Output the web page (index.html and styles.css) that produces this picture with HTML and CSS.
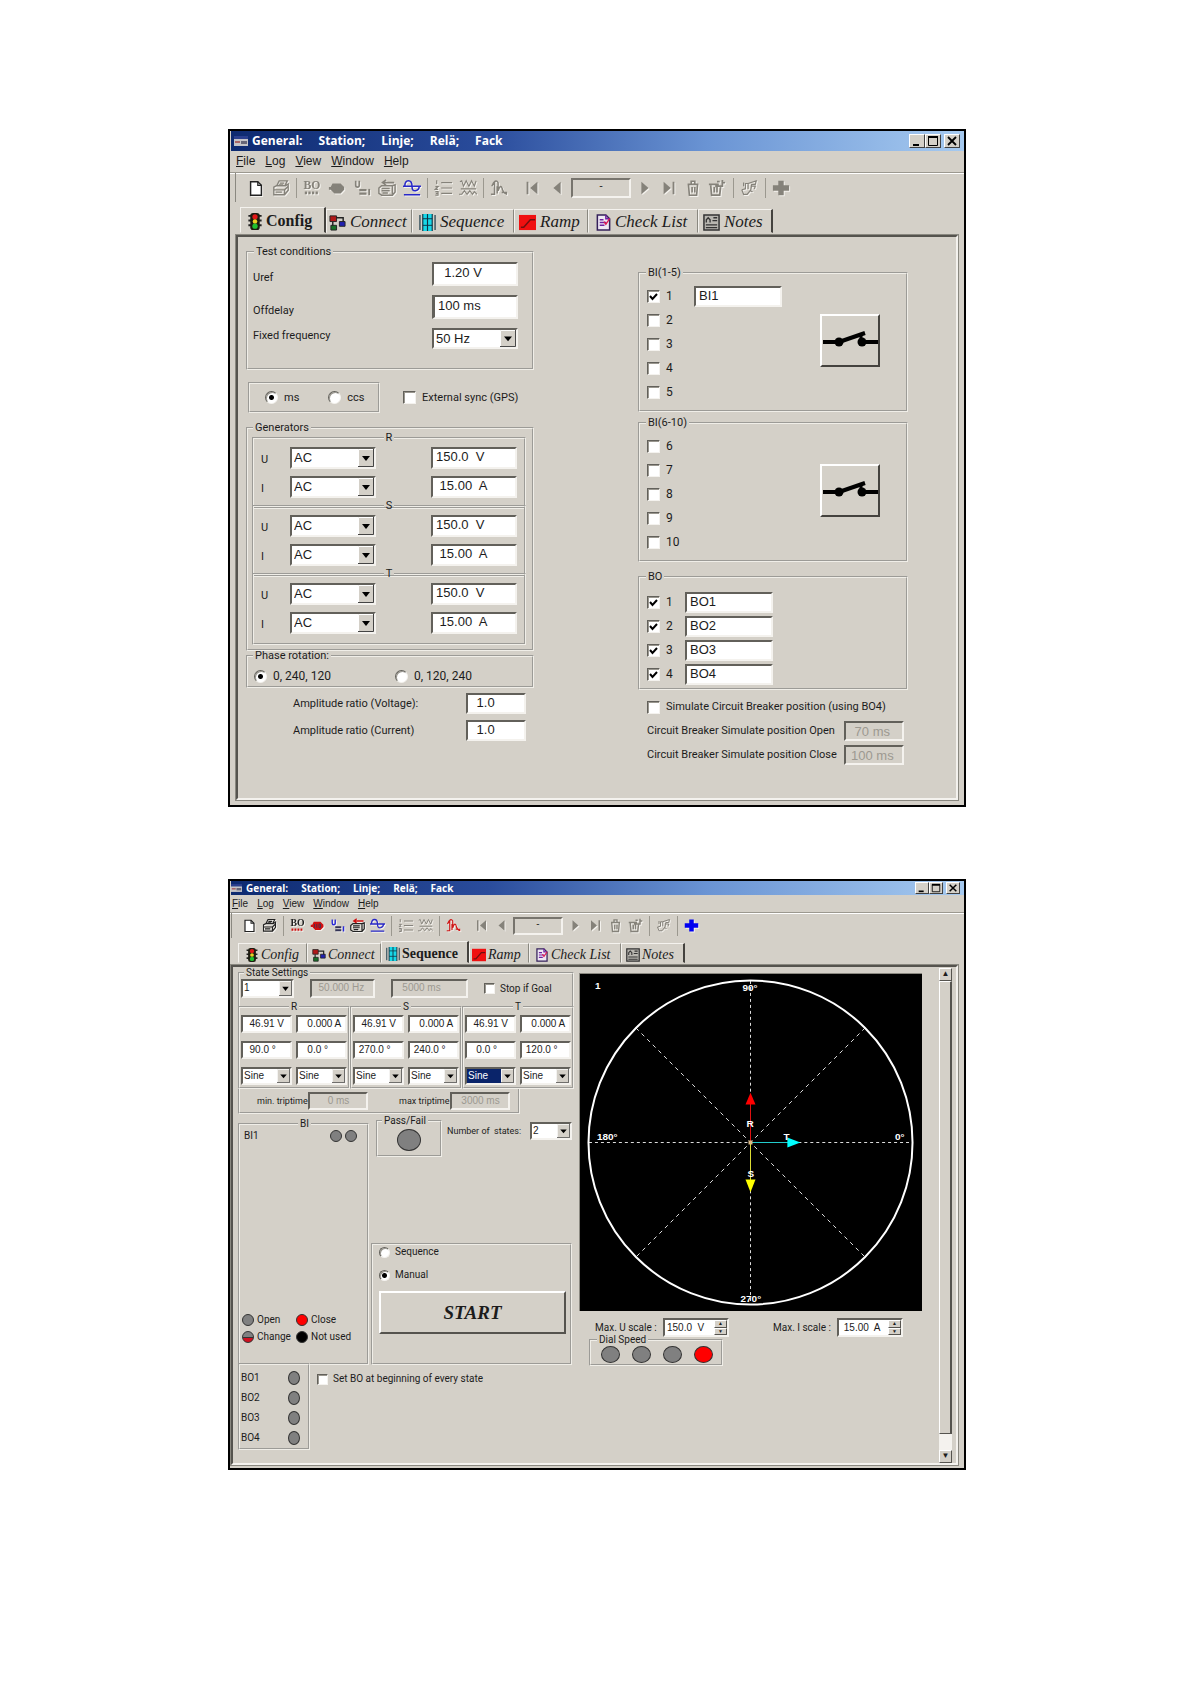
FILE: index.html
```html
<!DOCTYPE html>
<html lang="en">
<head>
<meta charset="utf-8">
<title>Relay test set</title>
<link rel="stylesheet" href="styles.css">
</head>
<body>
<svg class="sprite" aria-hidden="true">
  <symbol id="i-app" viewBox="0 0 14 10"><path d="M0 0h14v3H0z" fill="#2a3f8e"/><path d="M0 3h14v7H0z" fill="#c4c4c8"/><path d="M1 5h5v2H1z" fill="#a66"/><path d="M7 5h6v3H7z" fill="#667"/></symbol>
  <symbol id="i-new" viewBox="0 0 20 20"><path d="M4 3h8l4 4v11H4z" fill="#fff" stroke="currentColor" stroke-width="1.6"/><path d="M12 3v4h4" fill="none" stroke="currentColor" stroke-width="1.4"/></symbol>
  <symbol id="i-print" viewBox="0 0 20 20"><g fill="none" stroke="currentColor" stroke-width="1.5"><path d="M5 8l3-6h9l-3 6M8.500 4.500h5M7.500 6.500h5M2 9l3-1.500h10l3-2v7l-4 5H2zM2 12h12l4-4M14 12v5M4 14.500h7"/></g></symbol>
  <symbol id="i-bo" viewBox="0 0 20 20"><text x="10" y="11" text-anchor="middle" font-family="Liberation Serif, serif" font-weight="bold" font-size="13" fill="currentColor">BO</text><path d="M2 15.500h16" stroke="var(--accent, currentColor)" stroke-width="3" stroke-dasharray="2.500 1.500"/></symbol>
  <symbol id="i-fault" viewBox="0 0 20 20"><path d="M5 5h9l4 4v3l-4 4H7l-4-4H1V9h2z" fill="var(--accent, currentColor)"/><path d="M6 8v5M9 8v5M12 8v5h2V8z" stroke="var(--ink, currentColor)" fill="none"/></symbol>
  <symbol id="i-ui" viewBox="0 0 20 20"><path d="M3 2v5q0 2 2 2t2-2V2" fill="none" stroke="var(--blue, currentColor)" stroke-width="1.800"/><path d="M7 11h8v2.500H7zM7 15h8v2.500H7z" fill="var(--ink, currentColor)"/><path d="M18 11v7" stroke="var(--blue, currentColor)" stroke-width="2"/></symbol>
  <symbol id="i-send" viewBox="0 0 20 20"><path d="M18 4H5m4-3L5 4l4 3" fill="none" stroke="var(--accent, currentColor)" stroke-width="1.800"/><path d="M1 10l3-2.500h12l3-1v8l-3 3.500H4l-3-2zM4 10.500h9M4 13h9M16 8v9M5 15.500h6" fill="none" stroke="currentColor" stroke-width="1.600"/></symbol>
  <symbol id="i-wave" viewBox="0 0 20 20"><path d="M0 8h20M2 8q0-6 4-6t4 6 4 5 4-5M1 17.500h18" fill="none" stroke="currentColor" stroke-width="1.700"/></symbol>
  <symbol id="i-list" viewBox="0 0 20 20"><path d="M8 4h12M8 10h12M8 16h12M3 1.500v4M1.500 8.500h3l-3 3h3M1.500 14h3v4h-3M2 16h2" fill="none" stroke="currentColor" stroke-width="1.300"/></symbol>
  <symbol id="i-waves" viewBox="0 0 20 20"><path d="M1 3l2-1 2 6 3-6 3 6 3-6 3 6 2-6M0 17h3l3-4 3 4 3-4 3 4 2-3 3 3M2 11h17" fill="none" stroke="currentColor" stroke-width="1.200"/></symbol>
  <symbol id="i-fft" viewBox="0 0 20 20"><path d="M1 17h4V3M2 8q4-9 7-4v9q3-9 5-1 1 4 5 5M8 8v8M13 15h6" fill="none" stroke="currentColor" stroke-width="1.600"/></symbol>
  <symbol id="i-first" viewBox="0 0 20 20"><path d="M4 3h2v14H4zM16 3v14l-8-7z" fill="currentColor"/></symbol>
  <symbol id="i-prev" viewBox="0 0 20 20"><path d="M14 3v14l-8-7z" fill="currentColor"/></symbol>
  <symbol id="i-next" viewBox="0 0 20 20"><path d="M6 3v14l8-7z" fill="currentColor"/></symbol>
  <symbol id="i-last" viewBox="0 0 20 20"><path d="M4 3v14l8-7zM14 3h2v14h-2z" fill="currentColor"/></symbol>
  <symbol id="i-trash" viewBox="0 0 20 20"><path d="M4 6h12M8 5V2.500h4V5M5 7l1 11h8l1-11M9 9v6M12 9v6" fill="none" stroke="currentColor" stroke-width="1.800"/></symbol>
  <symbol id="i-trash2" viewBox="0 0 20 20"><path d="M1 6h11M3 7l1 11h9l1-9M7 9v6M10 9v6M8 8h8v-4h3M16 1v7M10 3h3" fill="none" stroke="currentColor" stroke-width="1.900"/></symbol>
  <symbol id="i-hand" viewBox="0 0 20 20"><path d="M2 12l4-1V5h3v6M9 5l9-3-1 4h-4l-1 6-4 5H4l-2-5M13 8h4l-1 3M4 4v4M11 13l3 1" fill="none" stroke="currentColor" stroke-width="1.300"/></symbol>
  <symbol id="i-plus" viewBox="0 0 20 20"><path d="M7 2h6v5h6v6h-6v5H7v-5H1V7h6z" fill="currentColor"/></symbol>
  <symbol id="t-light" viewBox="0 0 14 18"><path d="M0 3h14M0 8h14M0 13h14" stroke="#222" stroke-width="2"/><rect x="2" width="10" height="18" rx="3" fill="#1c1c10"/><circle cx="7" cy="4" r="2.800" fill="#e01818"/><circle cx="7" cy="9" r="2.400" fill="#e8d020"/><circle cx="7" cy="14" r="2.800" fill="#20c030"/></symbol>
  <symbol id="t-connect" viewBox="0 0 18 18"><path d="M6 4h9v6M4 8v5" stroke="#222" stroke-width="1.500" fill="none"/><path d="M1 2h7v6H1z" fill="#b01818" stroke="#222"/><path d="M11 8h6v5h-6z" fill="#2020b0" stroke="#222"/><path d="M2 12h6v5H2z" fill="#187028" stroke="#222"/></symbol>
  <symbol id="t-seq" viewBox="0 0 18 18"><path d="M4 0h10v18H4z" fill="#18d8e8"/><path d="M1 1v16M4 0v18M9 0v18M14 0v18M17 1v16" stroke="#134" stroke-width="1.200"/><path d="M4 5h10M4 12h10" stroke="#134"/></symbol>
  <symbol id="t-ramp" viewBox="0 0 18 18"><path d="M0 1h18v16H0z" fill="#f01010"/><path d="M2 14h3l7-8h5" fill="none" stroke="#701010" stroke-width="1.600"/></symbol>
  <symbol id="t-check" viewBox="0 0 15 18"><path d="M1 1h9l4 4v12H1z" fill="#eee8f4" stroke="#34205a" stroke-width="1.600"/><path d="M10 1v4h4M3.500 6h4M3.500 9h7M3.500 12h5" fill="none" stroke="#7020a0" stroke-width="1.600"/><path d="M8 8l2 3 4-6" fill="none" stroke="#e01850" stroke-width="1.400"/></symbol>
  <symbol id="t-notes" viewBox="0 0 18 18"><path d="M1 1h16v16H1z" fill="#b8b6b0" stroke="#333" stroke-width="1.600"/><path d="M3.500 9V6l2-2 2 2v3M11 4h4M10 7h5M3 11.500h12M3 14.500h12" fill="none" stroke="#333" stroke-width="1.400"/></symbol>
  <symbol id="i-switch" viewBox="0 0 56 48"><path d="M1 25h17M38 25h18" stroke="#000" stroke-width="4"/><path d="M17 25l26-9" stroke="#000" stroke-width="4"/><path d="M39 18v6" stroke="#000" stroke-width="3"/><circle cx="17" cy="25" r="4.500"/><circle cx="40" cy="25" r="4.500"/></symbol>
  <symbol id="i-min" viewBox="0 0 12 12"><path d="M2 9h6v2H2z"/></symbol>
  <symbol id="i-max" viewBox="0 0 12 12"><path d="M1.500 2.500h9v8h-9z" fill="none" stroke="#000"/><path d="M1 1h10v2H1z"/></symbol>
  <symbol id="i-close" viewBox="0 0 12 12"><path d="M2 2l8 8M10 2l-8 8" stroke="#000" stroke-width="1.800"/></symbol>
</svg>

<main class="page">
  <section class="window window--config" aria-label="Configuration window">
    <header class="titlebar">
      <svg class="titlebar__icon"><use href="#i-app"/></svg>
      <h1 class="titlebar__text"><span>General:</span><span>Station;</span><span>Linje;</span><span>Relä;</span><span>Fack</span></h1>
      <div class="titlebar__buttons">
        <button class="capbtn" aria-label="Minimize"><svg><use href="#i-min"/></svg></button><button class="capbtn" aria-label="Maximize"><svg><use href="#i-max"/></svg></button><button class="capbtn capbtn--close" aria-label="Close"><svg><use href="#i-close"/></svg></button>
      </div>
    </header>
    <nav class="menu"><button><u>F</u>ile</button><button><u>L</u>og</button><button><u>V</u>iew</button><button><u>W</u>indow</button><button><u>H</u>elp</button></nav>
    <div class="toolbar">
      <button class="tool tool--ink" aria-label="New"><svg><use href="#i-new"/></svg></button>
      <button class="tool" aria-label="Print"><svg><use href="#i-print"/></svg></button>
      <i class="sep"></i>
      <button class="tool" aria-label="Binary outputs"><svg><use href="#i-bo"/></svg></button>
      <button class="tool" aria-label="Fault"><svg><use href="#i-fault"/></svg></button>
      <button class="tool" aria-label="Voltage and current"><svg><use href="#i-ui"/></svg></button>
      <button class="tool" aria-label="Send"><svg><use href="#i-send"/></svg></button>
      <button class="tool tool--blue" aria-label="Waveform"><svg><use href="#i-wave"/></svg></button>
      <i class="sep"></i>
      <button class="tool" aria-label="List"><svg><use href="#i-list"/></svg></button>
      <button class="tool" aria-label="Waves"><svg><use href="#i-waves"/></svg></button>
      <i class="sep"></i>
      <button class="tool" aria-label="Transient"><svg><use href="#i-fft"/></svg></button>
      <i class="gap"></i>
      <button class="tool" aria-label="First"><svg><use href="#i-first"/></svg></button>
      <button class="tool" aria-label="Previous"><svg><use href="#i-prev"/></svg></button>
      <output class="counter">-</output>
      <button class="tool tool--tight" aria-label="Next"><svg><use href="#i-next"/></svg></button>
      <button class="tool tool--tight" aria-label="Last"><svg><use href="#i-last"/></svg></button>
      <button class="tool tool--tight" aria-label="Delete"><svg><use href="#i-trash"/></svg></button>
      <button class="tool tool--tight" aria-label="Delete all"><svg><use href="#i-trash2"/></svg></button>
      <i class="sep sep--light"></i>
      <button class="tool tool--tight" aria-label="Pick"><svg><use href="#i-hand"/></svg></button>
      <i class="sep sep--light"></i>
      <button class="tool tool--tight" aria-label="Add"><svg><use href="#i-plus"/></svg></button>
    </div>
    <div class="tabs" role="tablist">
      <button class="tab tab--config tab--active" role="tab" aria-selected="true"><svg><use href="#t-light"/></svg>Config</button>
      <button class="tab tab--connect" role="tab"><svg><use href="#t-connect"/></svg>Connect</button>
      <button class="tab tab--seq" role="tab"><svg><use href="#t-seq"/></svg>Sequence</button>
      <button class="tab tab--ramp" role="tab"><svg><use href="#t-ramp"/></svg>Ramp</button>
      <button class="tab tab--check" role="tab"><svg><use href="#t-check"/></svg>Check List</button>
      <button class="tab tab--notes" role="tab"><svg><use href="#t-notes"/></svg>Notes</button>
    </div>

    <div class="panel panel--config">
      <div class="config-left">
        <fieldset class="group conditions">
          <legend>Test conditions</legend>
          <label for="uref">Uref</label><input class="field" id="uref" value="  1.20 V">
          <label for="offdelay">Offdelay</label><input class="field field--caret" id="offdelay" value="100 ms">
          <label for="freq">Fixed frequency</label><select class="field" id="freq"><option>50 Hz</option></select>
        </fieldset>
        <div class="unit-row">
          <div class="units">
            <label class="opt"><input type="radio" name="unit" checked>ms</label>
            <label class="opt"><input type="radio" name="unit">ccs</label>
          </div>
          <label class="opt"><input type="checkbox">External sync (GPS)</label>
        </div>
        <fieldset class="group generators">
          <legend>Generators</legend>
          <fieldset class="group generator">
            <legend>R</legend>
            <label for="ru">U</label><select class="field" id="ru"><option>AC</option></select><input class="field" aria-label="R voltage" value="150.0  V">
            <label for="ri">I</label><select class="field" id="ri"><option>AC</option></select><input class="field" aria-label="R current" value=" 15.00  A">
          </fieldset>
          <fieldset class="group generator">
            <legend>S</legend>
            <label for="su">U</label><select class="field" id="su"><option>AC</option></select><input class="field" aria-label="S voltage" value="150.0  V">
            <label for="si">I</label><select class="field" id="si"><option>AC</option></select><input class="field" aria-label="S current" value=" 15.00  A">
          </fieldset>
          <fieldset class="group generator">
            <legend>T</legend>
            <label for="tu">U</label><select class="field" id="tu"><option>AC</option></select><input class="field" aria-label="T voltage" value="150.0  V">
            <label for="ti">I</label><select class="field" id="ti"><option>AC</option></select><input class="field" aria-label="T current" value=" 15.00  A">
          </fieldset>
        </fieldset>
        <fieldset class="group rotation">
          <legend>Phase rotation:</legend>
          <label class="opt"><input type="radio" name="rot" checked>0, 240, 120</label>
          <label class="opt"><input type="radio" name="rot">0, 120, 240</label>
        </fieldset>
        <div class="ratios">
          <label for="ratio-u">Amplitude ratio (Voltage):</label><input class="field" id="ratio-u" value=" 1.0">
          <label for="ratio-i">Amplitude ratio (Current)</label><input class="field" id="ratio-i" value=" 1.0">
        </div>
      </div>

      <div class="config-right">
        <fieldset class="group inputs">
          <legend>BI(1-5)</legend>
          <div class="bits">
            <div class="bit"><label class="opt"><input type="checkbox" checked>1</label><input class="field" aria-label="BI 1 name" value="BI1"></div>
            <div class="bit"><label class="opt"><input type="checkbox">2</label></div>
            <div class="bit"><label class="opt"><input type="checkbox">3</label></div>
            <div class="bit"><label class="opt"><input type="checkbox">4</label></div>
            <div class="bit"><label class="opt"><input type="checkbox">5</label></div>
          </div>
          <button class="switch" aria-label="Contact type, inputs 1 to 5"><svg><use href="#i-switch"/></svg></button>
        </fieldset>
        <fieldset class="group inputs inputs--second">
          <legend>BI(6-10)</legend>
          <div class="bits">
            <div class="bit"><label class="opt"><input type="checkbox">6</label></div>
            <div class="bit"><label class="opt"><input type="checkbox">7</label></div>
            <div class="bit"><label class="opt"><input type="checkbox">8</label></div>
            <div class="bit"><label class="opt"><input type="checkbox">9</label></div>
            <div class="bit"><label class="opt"><input type="checkbox">10</label></div>
          </div>
          <button class="switch" aria-label="Contact type, inputs 6 to 10"><svg><use href="#i-switch"/></svg></button>
        </fieldset>
        <fieldset class="group outputs">
          <legend>BO</legend>
          <div class="bit"><label class="opt"><input type="checkbox" checked>1</label><input class="field" aria-label="BO 1 name" value="BO1"></div>
          <div class="bit"><label class="opt"><input type="checkbox" checked>2</label><input class="field" aria-label="BO 2 name" value="BO2"></div>
          <div class="bit"><label class="opt"><input type="checkbox" checked>3</label><input class="field" aria-label="BO 3 name" value="BO3"></div>
          <div class="bit"><label class="opt"><input type="checkbox" checked>4</label><input class="field" aria-label="BO 4 name" value="BO4"></div>
        </fieldset>
        <div class="breaker">
          <label class="opt breaker__toggle"><input type="checkbox">Simulate Circuit Breaker position (using BO4)</label>
          <label for="cb-open">Circuit Breaker Simulate position Open</label><input class="field" id="cb-open" value=" 70 ms" disabled>
          <label for="cb-close">Circuit Breaker Simulate position Close</label><input class="field" id="cb-close" value="100 ms" disabled>
        </div>
      </div>
    </div>
  </section>

  <section class="window window--sequence" aria-label="Sequence window">
    <header class="titlebar">
      <svg class="titlebar__icon"><use href="#i-app"/></svg>
      <h1 class="titlebar__text"><span>General:</span><span>Station;</span><span>Linje;</span><span>Relä;</span><span>Fack</span></h1>
      <div class="titlebar__buttons">
        <button class="capbtn" aria-label="Minimize"><svg><use href="#i-min"/></svg></button><button class="capbtn" aria-label="Maximize"><svg><use href="#i-max"/></svg></button><button class="capbtn capbtn--close" aria-label="Close"><svg><use href="#i-close"/></svg></button>
      </div>
    </header>
    <nav class="menu"><button><u>F</u>ile</button><button><u>L</u>og</button><button><u>V</u>iew</button><button><u>W</u>indow</button><button><u>H</u>elp</button></nav>
    <div class="toolbar">
      <button class="tool tool--ink" aria-label="New"><svg><use href="#i-new"/></svg></button>
      <button class="tool tool--ink" aria-label="Print"><svg><use href="#i-print"/></svg></button>
      <i class="sep"></i>
      <button class="tool tool--ink tool--color" aria-label="Binary outputs"><svg><use href="#i-bo"/></svg></button>
      <button class="tool tool--ink tool--color" aria-label="Fault"><svg><use href="#i-fault"/></svg></button>
      <button class="tool tool--ink tool--color" aria-label="Voltage and current"><svg><use href="#i-ui"/></svg></button>
      <button class="tool tool--ink tool--color" aria-label="Send"><svg><use href="#i-send"/></svg></button>
      <button class="tool tool--blue" aria-label="Waveform"><svg><use href="#i-wave"/></svg></button>
      <i class="sep"></i>
      <button class="tool" aria-label="List"><svg><use href="#i-list"/></svg></button>
      <button class="tool" aria-label="Waves"><svg><use href="#i-waves"/></svg></button>
      <i class="sep"></i>
      <button class="tool tool--red" aria-label="Transient"><svg><use href="#i-fft"/></svg></button>
      <i class="gap"></i>
      <button class="tool" aria-label="First"><svg><use href="#i-first"/></svg></button>
      <button class="tool" aria-label="Previous"><svg><use href="#i-prev"/></svg></button>
      <output class="counter">-</output>
      <button class="tool tool--tight" aria-label="Next"><svg><use href="#i-next"/></svg></button>
      <button class="tool tool--tight" aria-label="Last"><svg><use href="#i-last"/></svg></button>
      <button class="tool tool--tight" aria-label="Delete"><svg><use href="#i-trash"/></svg></button>
      <button class="tool tool--tight" aria-label="Delete all"><svg><use href="#i-trash2"/></svg></button>
      <i class="sep sep--light"></i>
      <button class="tool tool--tight" aria-label="Pick"><svg><use href="#i-hand"/></svg></button>
      <i class="sep sep--light"></i>
      <button class="tool tool--tight tool--add" aria-label="Add"><svg><use href="#i-plus"/></svg></button>
    </div>
    <div class="tabs" role="tablist">
      <button class="tab tab--config" role="tab"><svg><use href="#t-light"/></svg>Config</button>
      <button class="tab tab--connect" role="tab"><svg><use href="#t-connect"/></svg>Connect</button>
      <button class="tab tab--seq tab--active" role="tab" aria-selected="true"><svg><use href="#t-seq"/></svg>Sequence</button>
      <button class="tab tab--ramp" role="tab"><svg><use href="#t-ramp"/></svg>Ramp</button>
      <button class="tab tab--check" role="tab"><svg><use href="#t-check"/></svg>Check List</button>
      <button class="tab tab--notes" role="tab"><svg><use href="#t-notes"/></svg>Notes</button>
    </div>

    <div class="panel panel--sequence">
      <div class="seq-left">
        <fieldset class="group state">
          <legend>State Settings</legend>
          <div class="state__row">
            <select class="field state__no" aria-label="State"><option>1</option></select>
            <input class="field state__hz" aria-label="Frequency" value="  50.000 Hz" disabled>
            <input class="field state__ms" aria-label="Duration" value="   5000 ms" disabled>
            <label class="opt"><input type="checkbox">Stop if Goal</label>
          </div>
          <div class="phases">
            <fieldset class="group phase">
              <legend>R</legend>
              <input class="field" aria-label="R voltage" value="  46.91 V"><input class="field" aria-label="R current" value="   0.000 A">
              <input class="field" aria-label="R voltage angle" value="  90.0 °"><input class="field" aria-label="R current angle" value="   0.0 °">
              <select class="field" aria-label="R voltage shape"><option>Sine</option></select><select class="field" aria-label="R current shape"><option>Sine</option></select>
            </fieldset>
            <fieldset class="group phase">
              <legend>S</legend>
              <input class="field" aria-label="S voltage" value="  46.91 V"><input class="field" aria-label="S current" value="   0.000 A">
              <input class="field" aria-label="S voltage angle" value=" 270.0 °"><input class="field" aria-label="S current angle" value=" 240.0 °">
              <select class="field" aria-label="S voltage shape"><option>Sine</option></select><select class="field" aria-label="S current shape"><option>Sine</option></select>
            </fieldset>
            <fieldset class="group phase">
              <legend>T</legend>
              <input class="field" aria-label="T voltage" value="  46.91 V"><input class="field" aria-label="T current" value="   0.000 A">
              <input class="field" aria-label="T voltage angle" value="   0.0 °"><input class="field" aria-label="T current angle" value=" 120.0 °">
              <select class="field field--selected" aria-label="T voltage shape"><option>Sine</option></select><select class="field" aria-label="T current shape"><option>Sine</option></select>
            </fieldset>
          </div>
        </fieldset>
        <div class="trip">
          <label for="trip-min">min. triptime</label><input class="field" id="trip-min" value="      0 ms" disabled>
          <label for="trip-max">max triptime</label><input class="field" id="trip-max" value="   3000 ms" disabled>
        </div>
        <div class="status">
          <fieldset class="group bi">
            <legend>BI</legend>
            <div class="bi__row"><span>BI1</span><i class="lamp"></i><i class="lamp"></i></div>
            <div class="key">
              <span><i class="lamp"></i>Open</span><span><i class="lamp lamp--red"></i>Close</span>
              <span><i class="lamp lamp--half"></i>Change</span><span><i class="lamp lamp--black"></i>Not used</span>
            </div>
          </fieldset>
          <div class="run">
            <div class="run__top">
              <fieldset class="group verdict"><legend>Pass/Fail</legend><i class="lamp lamp--big"></i></fieldset>
              <label for="states">Number of&nbsp; states:</label>
              <select class="field" id="states"><option>2</option></select>
            </div>
            <div class="mode">
              <label class="opt"><input type="radio" name="mode">Sequence</label>
              <label class="opt"><input type="radio" name="mode" checked>Manual</label>
              <button class="start">START</button>
            </div>
          </div>
        </div>
        <div class="bo-row">
          <div class="bo">
            <span>BO1</span><i class="lamp lamp--tall"></i>
            <span>BO2</span><i class="lamp lamp--tall"></i>
            <span>BO3</span><i class="lamp lamp--tall"></i>
            <span>BO4</span><i class="lamp lamp--tall"></i>
          </div>
          <label class="opt"><input type="checkbox">Set BO at beginning of every state</label>
        </div>
      </div>

      <div class="seq-right">
        <svg class="dial" viewBox="0 0 343 338" role="img" aria-label="Phasor diagram">
          <rect width="343" height="338"/>
          <g stroke="#ddd" stroke-dasharray="3 3"><path d="M171 7v324M9 169h324"/><path d="M56 54l230 230M286 54L56 284" stroke-dasharray="4 4"/></g>
          <circle cx="171" cy="169" r="162.500" fill="none" stroke="#fff" stroke-width="2"/>
          <g class="dial__text"><text x="15" y="15">1</text><text x="163" y="17">90°</text><text x="161" y="329">270°</text><text x="17" y="166">180°</text><text x="316" y="166">0°</text></g>
          <path d="M171 169v-40" stroke="#e01010"/><path d="M171 119l5 12h-10z" fill="#f00"/>
          <path d="M171 169v40" stroke="#dd3"/><path d="M171 219l5-13h-10z" fill="#ff0"/>
          <path d="M171 169h40" stroke="#2cc"/><path d="M221 169l-13-5v10z" fill="#0ff"/>
          <path d="M169 167h4v4h-4z" fill="#db8"/>
          <g class="dial__text"><text x="167" y="153">R</text><text x="168" y="204">S</text><text x="204" y="166">T</text></g>
        </svg>
        <div class="scales">
          <label for="max-u">Max. U scale :</label><span class="field spin"><input id="max-u" value="150.0  V"><button aria-label="Increase U">▲</button><button aria-label="Decrease U">▼</button></span>
          <label for="max-i">Max. I scale :</label><span class="field spin"><input id="max-i" value=" 15.00  A"><button aria-label="Increase I">▲</button><button aria-label="Decrease I">▼</button></span>
        </div>
        <fieldset class="group speed"><legend>Dial Speed</legend><i class="lamp lamp--mid"></i><i class="lamp lamp--mid"></i><i class="lamp lamp--mid"></i><i class="lamp lamp--mid lamp--red"></i></fieldset>
      </div>

      <div class="scrollbar" aria-hidden="true"><i class="scrollbar__btn">▲</i><i class="scrollbar__thumb"></i><i class="scrollbar__track"></i><i class="scrollbar__btn">▼</i></div>
    </div>
  </section>
</main>
</body>
</html>
```
FILE: styles.css
```css
* { box-sizing: border-box; }

body { margin: 0; background: #fff; color: #1c1c1c; }

button, input, select { font: inherit; color: inherit; margin: 0; padding: 0; border-radius: 0; }
button { background: none; border: 0; }
svg { display: block; }
.sprite { display: none; }

.page {
  display: grid;
  gap: 72px;
  padding: 129px 225px 214px 228px;
}

/* Window frame */
.window {
  --face: #d4d0c8;
  --edge: #55534e;
  border: 2px solid #000;
  background: var(--face);
  font-family: Roboto, "Liberation Sans", Arial, sans-serif;
  font-size: var(--ui);
  line-height: var(--line);
  min-width: 0;
}
.window--config {
  --ui: 11px; --value: 13px; --line: 14px; --icon: 18px; --tool: 25px; --tight: 24px; --sep: 6px; --sep-light: 8px; --box: 60px; --check: 13px;
  padding-bottom: 5px;
}
.window--sequence {
  --ui: 10px; --value: 10px; --line: 12px; --icon: 15px; --tool: 20px; --tight: 20px; --sep: 8px; --sep-light: 8px; --box: 50px; --check: 11px;
  padding-bottom: 3px;
}

.titlebar {
  display: flex;
  align-items: center;
  height: 20px;
  padding: 0 4px 0 3px;
  margin: 0 0 0 1px;
  background: linear-gradient(90deg, #0d2a70, #2a4c9c 35%, #6a94d4 65%, #a6caf0);
  color: #fff;
}
.titlebar__icon { width: 14px; height: 10px; }
.titlebar__text {
  display: flex;
  gap: 16px;
  margin: 0 auto 0 4px;
  font: bold 12px/16px "Open Sans", "Noto Sans", sans-serif;
}
.titlebar__buttons { display: flex; }
.capbtn {
  width: 16px;
  height: 14px;
  background: var(--face);
  border: 1px solid;
  border-color: #fff #404040 #404040 #fff;
}
.capbtn svg { width: 12px; height: 12px; margin: auto; }
.capbtn--close { margin-left: 3px; }
.window--sequence .titlebar { height: 14px; padding-left: 0; }
.window--sequence .titlebar__icon { width: 11px; height: 8px; }
.window--sequence .titlebar__text { font-size: 10px; line-height: 14px; gap: 13px; }
.window--sequence .capbtn { width: 14px; height: 12px; }
.window--sequence .capbtn svg { width: 10px; height: 10px; }

.menu {
  display: flex;
  gap: 10px;
  padding: 0 6px;
  height: 22px;
  border-bottom: 1px solid #9b988f;
  box-shadow: 0 1px #fff;
  font: 12px/21px "Liberation Sans", Arial, sans-serif;
}
.window--sequence .menu { gap: 9px; padding: 0 2px; height: 18px; font-size: 10px; line-height: 18px; }

.toolbar {
  display: flex;
  align-items: center;
  height: 29px;
  margin-left: 5px;
  padding-left: 7px;
  border-left: 1px solid #8a8880;
}
.window--sequence .toolbar { height: 25px; margin-left: 1px; }
.tool { flex: none; width: var(--tool); color: #85827a; }
.tool svg { width: var(--icon); height: var(--icon); margin: auto; filter: drop-shadow(1px 1px 0 #f4f2ee); }
.tool--tight { width: var(--tight); }
.tool--ink { color: #222; }
.tool--blue { color: #2828c8; }
.tool--red { color: #d01818; }
.tool--add { color: #0000f0; }
.tool--color { --accent: #d01010; --blue: #2828d8; --ink: #335; }
.sep { flex: none; width: var(--sep); height: 20px; background: linear-gradient(#9b988f, #9b988f) center / 1px 100% no-repeat; }
.sep--light { width: var(--sep-light); }
.gap { flex: none; width: 8px; }
.counter {
  flex: none;
  width: var(--box);
  height: 20px;
  margin: 0 2px;
  border: 2px solid;
  border-color: #77746d #f4f2ee #f4f2ee #77746d;
  text-align: center;
}
.window--sequence .counter { height: 18px; }

/* Tabs */
.tabs { display: flex; align-items: flex-end; height: 33px; padding: 0 10px 2px; font-family: "Liberation Serif", "Times New Roman", serif; }
.tab {
  display: flex;
  align-items: center;
  gap: 4px;
  flex: none;
  height: 24px;
  padding: 2px 0 0 4px;
  border: 1px solid;
  border-color: #f4f2ee #8a8880 transparent #f4f2ee;
  font-size: 17px;
  line-height: 20px;
  font-style: italic;
  white-space: nowrap;
}
.tab svg { flex: none; width: 17px; height: 17px; }
.tab--config svg { width: 14px; }
.tab--check svg { width: 15px; }
.tab--active { height: 26px; font-style: normal; font-weight: bold; border-right: 2px solid #44423e; }
.tab--config { width: 86px; padding-left: 7px; }
.tab--connect { width: 86px; padding-left: 2px; }
.tab--seq { width: 102px; padding-left: 6px; }
.tab--ramp { width: 74px; }
.tab--check { width: 110px; padding-left: 7px; }
.tab--notes { width: 75px; border-right: 2px solid #44423e; }
.tab--config.tab--active { font-size: 16px; }
.window--sequence .tabs { height: 27px; padding: 0 8px 2px; }
.window--sequence .tab { height: 20px; padding-top: 3px; gap: 2px; font-size: 14px; line-height: 16px; }
.window--sequence .tab--active { height: 22px; }
.window--sequence .tab svg { width: 14px; height: 14px; }
.window--sequence .tab--config { width: 69px; gap: 3px; }
.window--sequence .tab--config svg { width: 12px; }
.window--sequence .tab--connect { width: 74px; padding-left: 4px; }
.window--sequence .tab--seq { width: 88px; padding-left: 4px; }
.window--sequence .tab--ramp { width: 60px; padding-left: 2px; }
.window--sequence .tab--check { width: 92px; padding-left: 5px; }
.window--sequence .tab--notes { width: 64px; }

.panel {
  border: 2px solid;
  border-color: var(--edge) #f4f2ee #f4f2ee var(--edge);
  outline: 1px solid #8a8880;
}

/* Shared controls */
.group { min-width: 0; margin: 0; padding: 0; border: 2px groove #f0eee8; }
.group > legend { margin-left: 1px; padding: 0 2px; line-height: var(--line); }

.field {
  appearance: none;
  min-width: 0;
  width: 100%;
  height: 22px;
  padding: 0 0 2px 3px;
  background-color: #fff;
  border: 2px solid;
  border-color: #62605a #f4f2ee #f4f2ee #62605a;
  font-family: "Liberation Sans", Arial, sans-serif;
  font-size: var(--value);
  white-space: pre;
  outline: 0;
}
.field:disabled { background-color: transparent; color: #9c9991; opacity: 1; }
.field--caret { border-left-width: 3px; }
select.field {
  padding: 0 0 0 2px;
  background-image: url("data:image/svg+xml,%3Csvg xmlns='http://www.w3.org/2000/svg' viewBox='0 0 16 18' preserveAspectRatio='none'%3E%3Cpath d='M0 0h16v18H0z' fill='%23d4d0c8'/%3E%3Cpath d='M.5 17V.5H15' stroke='%23fff' fill='none'/%3E%3Cpath d='M0 17.500h15.500V0' stroke='%23444' fill='none'/%3E%3Cpath d='M4 7h8l-4 5z'/%3E%3C/svg%3E");
  background-position: right center;
  background-repeat: no-repeat;
  background-size: 16px 100%;
}
.window--sequence .field { height: 18px; padding-bottom: 1px; padding-left: 1px; }
.window--sequence select.field { background-size: 13px 100%; }
.window--sequence .field--selected {
  color: #fff;
  background-color: #0a246a;
}

.opt { display: inline-flex; align-items: center; gap: 6px; white-space: nowrap; }
.window--sequence .opt { gap: 5px; }
.opt input {
  appearance: none;
  flex: none;
  width: var(--check);
  height: var(--check);
  background: #fff center / 9px 9px no-repeat;
  border: 1px solid;
  border-color: #62605a #f4f2ee #f4f2ee #62605a;
  box-shadow: inset 1px 1px #9a978f;
}
.opt input[type="radio"] { border-radius: 50%; }
.opt input[type="radio"]:checked { background-image: radial-gradient(circle, #000 2px, transparent 3px); }
.opt input[type="checkbox"]:checked {
  background-image: url("data:image/svg+xml,%3Csvg xmlns='http://www.w3.org/2000/svg' viewBox='0 0 9 9'%3E%3Cpath d='M1 4l2.500 3L8 2' stroke='%23000' stroke-width='2' fill='none'/%3E%3C/svg%3E");
}

/* Config panel */
.panel--config {
  display: grid;
  grid-template-columns: 288px 270px;
  justify-content: space-between;
  align-items: start;
  margin: 0 6px;
  padding: 8px 48px 33px 8px;
}
.config-left, .config-right { display: flex; flex-direction: column; min-width: 0; }

.conditions {
  display: grid;
  grid-template-columns: 1fr 86px;
  row-gap: 9px;
  align-items: center;
  padding: 3px 14px 19px 5px;
}
.conditions .field { height: 24px; padding-bottom: 4px; }
.conditions select.field { height: 21px; padding-bottom: 0; }
.conditions label { padding-top: 7px; }
.conditions label:last-of-type { padding: 0 0 6px; }

.unit-row { display: flex; align-items: center; gap: 23px; margin: 12px 0 0 2px; }
.units { display: flex; gap: 29px; align-items: center; width: 132px; height: 31px; padding-left: 15px; border: 2px groove #f0eee8; }

.generators { margin-top: 8px; padding: 0 6px 4px 4px; }
.generator {
  display: grid;
  grid-template-columns: 29px 86px 1fr 86px;
  row-gap: 7px;
  align-items: center;
  padding: 2px 7px 9px;
}
.generator:first-of-type { margin-top: -4px; }
.generator + .generator { margin-top: -10px; }
.generator > legend { margin: 0 auto; }
.generator input { grid-column: 4; padding-bottom: 4px; }
.generator label { padding-top: 4px; }

.rotation { display: grid; grid-template-columns: 141px 1fr; margin-top: -2px; padding: 6px 6px 3px 6px; }
.rotation > legend, .inputs > legend, .outputs > legend { margin-left: -1px; }

.ratios {
  display: grid;
  grid-template-columns: 1fr 60px;
  gap: 6px 0;
  align-items: center;
  margin-top: 5px;
  padding: 0 8px 0 47px;
}
.ratios .field { height: 21px; padding: 0 0 2px 5px; }

.inputs { display: flex; justify-content: space-between; align-items: flex-start; margin-top: 21px; padding: 4px 26px 6px 7px; }
.inputs--second { margin-top: 4px; }
.bit { display: grid; grid-template-columns: 47px 88px; align-items: center; height: 24px; }
.switch {
  width: 60px;
  height: 53px;
  margin-top: 30px;
  border: 2px solid;
  border-color: #fff #44423e #44423e #fff;
}
.switch svg { width: 56px; height: 48px; }
.outputs { margin-top: 8px; padding: 6px 7px 2px; }
.outputs .bit { grid-template-columns: 38px 88px; }
.bit .field { height: 21px; }
.bit .opt, .rotation .opt { font-size: 12px; }

.breaker {
  display: grid;
  grid-template-columns: minmax(0, 1fr) 60px;
  row-gap: 4px;
  align-items: center;
  margin-top: 7px;
  padding: 0 4px 0 9px;
  white-space: nowrap;
}
.breaker .field { height: 20px; padding: 0 0 0 5px; }
.breaker__toggle { grid-column: 1 / -1; height: 20px; }

/* Sequence panel */
.panel--sequence {
  display: grid;
  grid-template-columns: 336px 343px 1fr;
  column-gap: 5px;
  margin: 0 6px 0 1px;
  padding: 0 4px 0 5px;
}
.seq-left { min-width: 0; padding-bottom: 13px; }

.state > legend { margin-left: 4px; }
.state__row { display: flex; align-items: center; gap: 16px; padding-left: 1px; }
.state__row .field { flex: none; height: 19px; padding-bottom: 2px; }
.state__row .state__no { width: 53px; }
.state__row .state__hz { width: 65px; }
.state__row .state__ms { width: 77px; }
.phases { display: grid; grid-template-columns: repeat(3, 1fr); margin: 3px -2px -2px; }
.phase { display: grid; grid-template-columns: 1fr 1fr; gap: 8px 4px; padding: 2px 1px; }
.phase > legend { margin: 0 auto; }

.trip { display: flex; align-items: center; width: 282px; height: 27px; margin-top: -2px; padding-left: 17px; border: 2px groove #f0eee8; white-space: nowrap; }
.trip label, .run__top > label { font-size: 9px; }
.trip label { flex: none; width: 51px; }
.trip .field { flex: none; width: 60px; }
.trip .field + label { margin-left: 31px; }

.status { display: grid; grid-template-columns: 131px minmax(0, 1fr); gap: 2px; margin-top: 4px; padding-right: 2px; }
.bi > legend { margin: 0 auto; }
.bi { display: grid; align-content: space-between; padding: 0 0 18px 2px; }
.bi__row { display: flex; align-items: center; gap: 3px; padding: 0 10px 0 2px; }
.bi__row span { margin-right: auto; }
.key { display: grid; grid-template-columns: 54px 1fr; grid-auto-rows: 17px; white-space: nowrap; }
.key span { display: flex; align-items: center; gap: 3px; }

.lamp { flex: none; width: 12px; height: 12px; border: 1px solid #333; border-radius: 50%; background: #808080; }
.lamp--red { background: #f00; }
.lamp--black { background: #000; }
.lamp--half { background: linear-gradient(#808080 45%, #333 45% 55%, #d01020 55%); }
.lamp--tall { height: 14px; }
.lamp--mid { width: 19px; height: 17px; }
.lamp--big { display: block; width: 24px; height: 22px; margin: 2px auto 4px; }

.run { margin-top: -3px; }
.run__top { display: flex; align-items: flex-start; }
.verdict { flex: none; width: 66px; margin-left: 5px; }
.verdict > legend { margin-left: 4px; }
.run__top > label { margin: 10px 0 0 5px; white-space: nowrap; }
.run__top > .field { width: 42px; margin: 7px 0 0 auto; }
.mode { display: flex; flex-direction: column; align-items: flex-start; gap: 9px; margin-top: 86px; padding: 0 4px 29px 6px; border: 2px groove #f0eee8; }
.mode .opt { height: 14px; }
.start {
  align-self: stretch;
  height: 43px;
  border: 2px solid;
  border-color: #fff #55534e #55534e #fff;
  font: italic bold 19px/24px "Liberation Serif", "Times New Roman", serif;
}

.bo-row { display: flex; align-items: flex-start; gap: 7px; margin-top: -2px; }
.bo-row .opt { margin-top: 10px; }
.bo { display: grid; grid-template-columns: 1fr 12px; grid-auto-rows: 20px; align-items: center; width: 72px; padding: 3px 8px 0 1px; border: 2px groove #f0eee8; }

.seq-right { min-width: 0; padding-top: 6px; }
.dial { width: 100%; height: auto; border: 1px solid #8a8880; border-width: 1px 0 0 1px; }
.dial__text { fill: #fff; font: bold 10px "Liberation Sans", Arial, sans-serif; }
.scales { display: grid; grid-template-columns: 68px 66px 1fr 66px; align-items: center; margin-top: 7px; padding: 0 19px 0 16px; white-space: nowrap; }
.scales > label:nth-of-type(2) { padding-left: 44px; }
.scales .spin { display: grid; grid-template-columns: 1fr 13px; grid-template-rows: 1fr 1fr; height: 19px; padding: 0 0 0 2px; }
.spin input { grid-row: 1 / 3; min-width: 0; width: 100%; border: 0; background: none; outline: 0; }
.spin button { background: var(--face); border: 1px solid; border-color: #fff #55534e #55534e #fff; font-size: 5px; line-height: 5px; overflow: hidden; }
.speed { display: flex; gap: 12px; width: 134px; margin: -3px 0 0 10px; padding: 0 0 1px 10px; }
.speed > legend { margin-left: -4px; }

.scrollbar { justify-self: end; display: flex; flex-direction: column; width: 13px; padding-top: 1px; font-size: 8px; line-height: 10px; text-align: center; }
.scrollbar i { font-style: normal; }
.scrollbar__btn, .scrollbar__thumb { border: 1px solid; border-color: #fff #55534e #55534e #fff; background: var(--face); }
.scrollbar__btn { height: 13px; }
.scrollbar__thumb { flex: 1; border-right-width: 2px; }
.scrollbar__track { height: 16px; background: #f4f2ee; }
```
